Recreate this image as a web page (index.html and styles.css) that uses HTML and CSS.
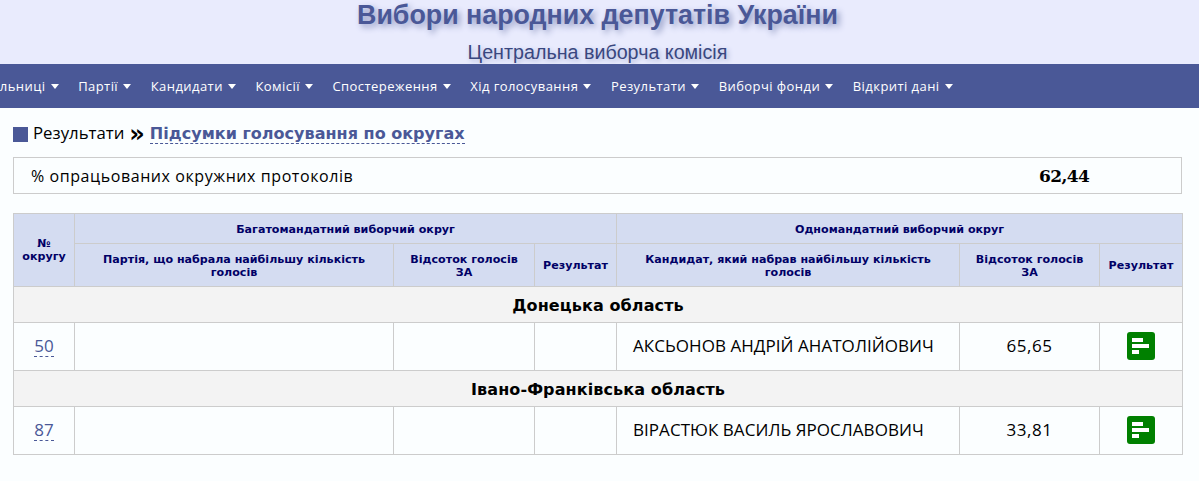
FILE: index.html
```html
<!DOCTYPE html>
<html lang="uk">
<head>
<meta charset="utf-8">
<title>Вибори народних депутатів України</title>
<link rel="stylesheet" href="styles.css">
</head>
<body>
<header class="masthead">
  <h1 class="title">Вибори народних депутатів України</h1>
  <p class="subtitle">Центральна виборча комісія</p>
</header>
<nav class="nav">
  <ul class="nav-list">
    <li class="nav-item">Виборчі дільниці<span class="caret"></span></li>
    <li class="nav-item">Партії<span class="caret"></span></li>
    <li class="nav-item">Кандидати<span class="caret"></span></li>
    <li class="nav-item">Комісії<span class="caret"></span></li>
    <li class="nav-item">Спостереження<span class="caret"></span></li>
    <li class="nav-item">Хід голосування<span class="caret"></span></li>
    <li class="nav-item">Результати<span class="caret"></span></li>
    <li class="nav-item">Виборчі фонди<span class="caret"></span></li>
    <li class="nav-item">Відкриті дані<span class="caret"></span></li>
  </ul>
</nav>
<main class="content">
  <div class="crumbs">
    <span class="square"></span>
    <span class="crumb">Результати</span>
    <span class="sep">»</span>
    <a class="crumb-link">Підсумки голосування по округах</a>
  </div>
  <div class="summary">
    <span class="summary-label">% опрацьованих окружних протоколів</span>
    <span class="summary-value">62,44</span>
  </div>
  <table class="results">
    <colgroup>
      <col class="c1"><col class="c2"><col class="c3"><col class="c4">
      <col class="c5"><col class="c6"><col class="c7">
    </colgroup>
    <thead>
      <tr class="head-top">
        <th rowspan="2" class="head-num">№<br>округу</th>
        <th colspan="3">Багатомандатний виборчий округ</th>
        <th colspan="3">Одномандатний виборчий округ</th>
      </tr>
      <tr class="head-sub">
        <th>Партія, що набрала найбільшу кількість голосів</th>
        <th>Відсоток голосів<br>ЗА</th>
        <th>Результат</th>
        <th>Кандидат, який набрав найбільшу кількість голосів</th>
        <th>Відсоток голосів<br>ЗА</th>
        <th>Результат</th>
      </tr>
    </thead>
    <tbody>
      <tr class="region"><td colspan="7">Донецька область</td></tr>
      <tr class="row">
        <td class="num"><a class="num-link">50</a></td>
        <td></td><td></td><td></td>
        <td class="name">АКСЬОНОВ АНДРІЙ АНАТОЛІЙОВИЧ</td>
        <td class="pct">65,65</td>
        <td class="act"><svg class="icon" width="28" height="28" viewBox="0 0 28 28"><rect width="28" height="28" rx="3" fill="#008000"/><path fill="#fff" d="M5 6h11v4H5zM5 12h17v4H5zM5 18h7v4H5z"/></svg></td>
      </tr>
      <tr class="region"><td colspan="7">Івано-Франківська область</td></tr>
      <tr class="row">
        <td class="num"><a class="num-link">87</a></td>
        <td></td><td></td><td></td>
        <td class="name">ВІРАСТЮК ВАСИЛЬ ЯРОСЛАВОВИЧ</td>
        <td class="pct">33,81</td>
        <td class="act"><svg class="icon" width="28" height="28" viewBox="0 0 28 28"><rect width="28" height="28" rx="3" fill="#008000"/><path fill="#fff" d="M5 6h11v4H5zM5 12h17v4H5zM5 18h7v4H5z"/></svg></td>
      </tr>
    </tbody>
  </table>
</main>
</body>
</html>
```
FILE: styles.css
```css
* { box-sizing: border-box; }
html, body { margin: 0; padding: 0; }
body {
  background: #fbfeff;
  color: #000;
  font-family: "DejaVu Sans", sans-serif;
  height: 481px;
  overflow: hidden;
}
.masthead {
  background: #e9ebfd;
  height: 64px;
  padding-right: 4px;
  text-align: center;
  font-family: "Liberation Sans", Arial, sans-serif;
  overflow: hidden;
}
.title {
  margin: 0;
  font-size: 26.8px;
  line-height: 30px;
  font-weight: bold;
  color: #4a5897;
  text-shadow: 3px 3px 6px #8f98c2;
}
.subtitle {
  margin: 0;
  padding-top: 11px;
  font-size: 19.7px;
  line-height: 23px;
  color: #39477f;
  text-shadow: 2px 2px 5px #aab2d6;
}
.nav {
  background: #4a5897;
  height: 44px;
  overflow: hidden;
}
.nav-list {
  list-style: none;
  margin: 0 0 0 -70px;
  padding: 0;
  display: flex;
  white-space: nowrap;
}
.nav-item {
  color: #fff;
  font-family: "Open Sans", sans-serif;
  font-size: 13px;
  letter-spacing: 0.44px;
  line-height: 44px;
  margin-right: 19.6px;
}
.caret {
  display: inline-block;
  width: 0;
  height: 0;
  margin-left: 5px;
  vertical-align: 2px;
  border-left: 4.5px solid transparent;
  border-right: 4.5px solid transparent;
  border-top: 5px solid #fff;
}
.content {
  padding: 16px 17px 0 13px;
}
.crumbs {
  display: flex;
  align-items: center;
  height: 20px;
  font-size: 16.8px;
  line-height: 18px;
  font-family: "Open Sans", sans-serif;
}
.crumb { margin-top: -2px; }
.square {
  width: 15px;
  height: 15px;
  background: #4a5897;
  margin-right: 5px;
}
.sep {
  font-family: "DejaVu Sans", sans-serif;
  font-weight: bold;
  font-size: 24px;
  line-height: 20px;
  margin: 0 5px 0 5px;
}
.crumb-link {
  font-family: "DejaVu Sans", sans-serif;
  font-size: 16.05px;
  font-weight: bold;
  color: #4a5897;
  border-bottom: 1px dashed #4a5897;
  line-height: 18px;
}
.summary {
  margin-top: 13px;
  height: 37px;
  border: 1px solid #ccc;
  width: 1169px;
  display: flex;
  align-items: center;
  padding-left: 17px;
  font-family: "Open Sans", sans-serif;
  font-size: 16px;
  letter-spacing: 0.58px;
}
.summary-label { width: 1008px; }
.summary-value {
  font-family: "DejaVu Serif", serif;
  font-weight: bold;
  font-size: 17px;
  letter-spacing: -0.6px;
}
.results {
  margin-top: 19px;
  width: 1169px;
  table-layout: fixed;
  border-collapse: collapse;
}
.c1 { width: 61px; }
.c2 { width: 319px; }
.c3 { width: 141px; }
.c4 { width: 82px; }
.c5 { width: 343px; }
.c6 { width: 140px; }
.c7 { width: 83px; }
.results th, .results td { border: 1px solid #ccc; padding: 0; }
.results th {
  background: #d4dcf1;
  color: #000066;
  font-size: 11.1px;
  line-height: 13px;
  font-weight: bold;
  text-align: center;
  padding: 1px 8px 0;
}
.results .head-num { padding: 0; }
.head-top { height: 30px; }
.head-sub { height: 43px; }
.region { height: 36px; }
.results .region td {
  background: #f3f3f3;
  text-align: center;
  font-weight: bold;
  font-size: 16px;
  letter-spacing: 0.1px;
  padding-top: 1px;
  font-family: "DejaVu Sans", sans-serif;
}
.row { height: 48px; }
.results .row td {
  font-family: "Open Sans", sans-serif;
  font-size: 17px;
  padding-bottom: 2px;
}
.num { text-align: center; }
.num-link {
  color: #4a5897;
  border-bottom: 1px dashed #4a5897;
  line-height: 20px;
  display: inline-block;
}
.results .row .name { padding-left: 16px; letter-spacing: 0.05px; }
.pct { text-align: center; letter-spacing: 0.6px; }
.act { text-align: center; }
.icon { display: block; margin: 0 auto; }
```
